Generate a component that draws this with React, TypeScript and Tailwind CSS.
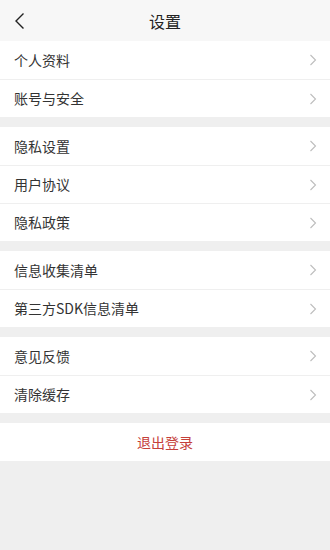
const groups: string[][] = [
  ['个人资料', '账号与安全'],
  ['隐私设置', '用户协议', '隐私政策'],
  ['信息收集清单', '第三方SDK信息清单'],
  ['意见反馈', '清除缓存'],
]

function Chevron() {
  return (
    <svg width="8" height="12" viewBox="0 0 8 12" fill="none">
      <path d="M1.5 1 L6.5 6 L1.5 11" stroke="#bdbdbd" strokeWidth="1.1" />
    </svg>
  )
}

export default function App() {
  return (
    <div
      className="min-h-[550px] w-full bg-[#efefef]"
      style={{ fontFamily: '"Noto Sans CJK SC", "Liberation Sans", sans-serif' }}
    >
      {/* Header */}
      <div className="relative flex h-[41px] items-center justify-center bg-[#f7f7f7]">
        <svg className="absolute left-[13px] top-[12px]" width="14" height="18" viewBox="0 0 14 18" fill="none">
          <path d="M10.5 1.5 L3 9 L10.5 16.5" stroke="#222" strokeWidth="1.4" />
        </svg>
        <span className="text-[16px] text-[#222]">设置</span>
      </div>

      <div className="flex flex-col gap-[10px]">
        {groups.map((items, gi) => (
          <div key={gi} className="bg-white">
            {items.map((label, i) => (
              <div
                key={label}
                className={`flex h-[38px] items-center justify-between pl-[14px] pr-[13px] ${i > 0 ? 'border-t border-[#efefef]' : ''}`}
              >
                <span className="text-[14px] text-[#333]">{label}</span>
                <Chevron />
              </div>
            ))}
          </div>
        ))}

        <div className="flex h-[38px] items-center justify-center bg-white">
          <span className="text-[14px] text-[#c5403a]">退出登录</span>
        </div>
      </div>
    </div>
  )
}
